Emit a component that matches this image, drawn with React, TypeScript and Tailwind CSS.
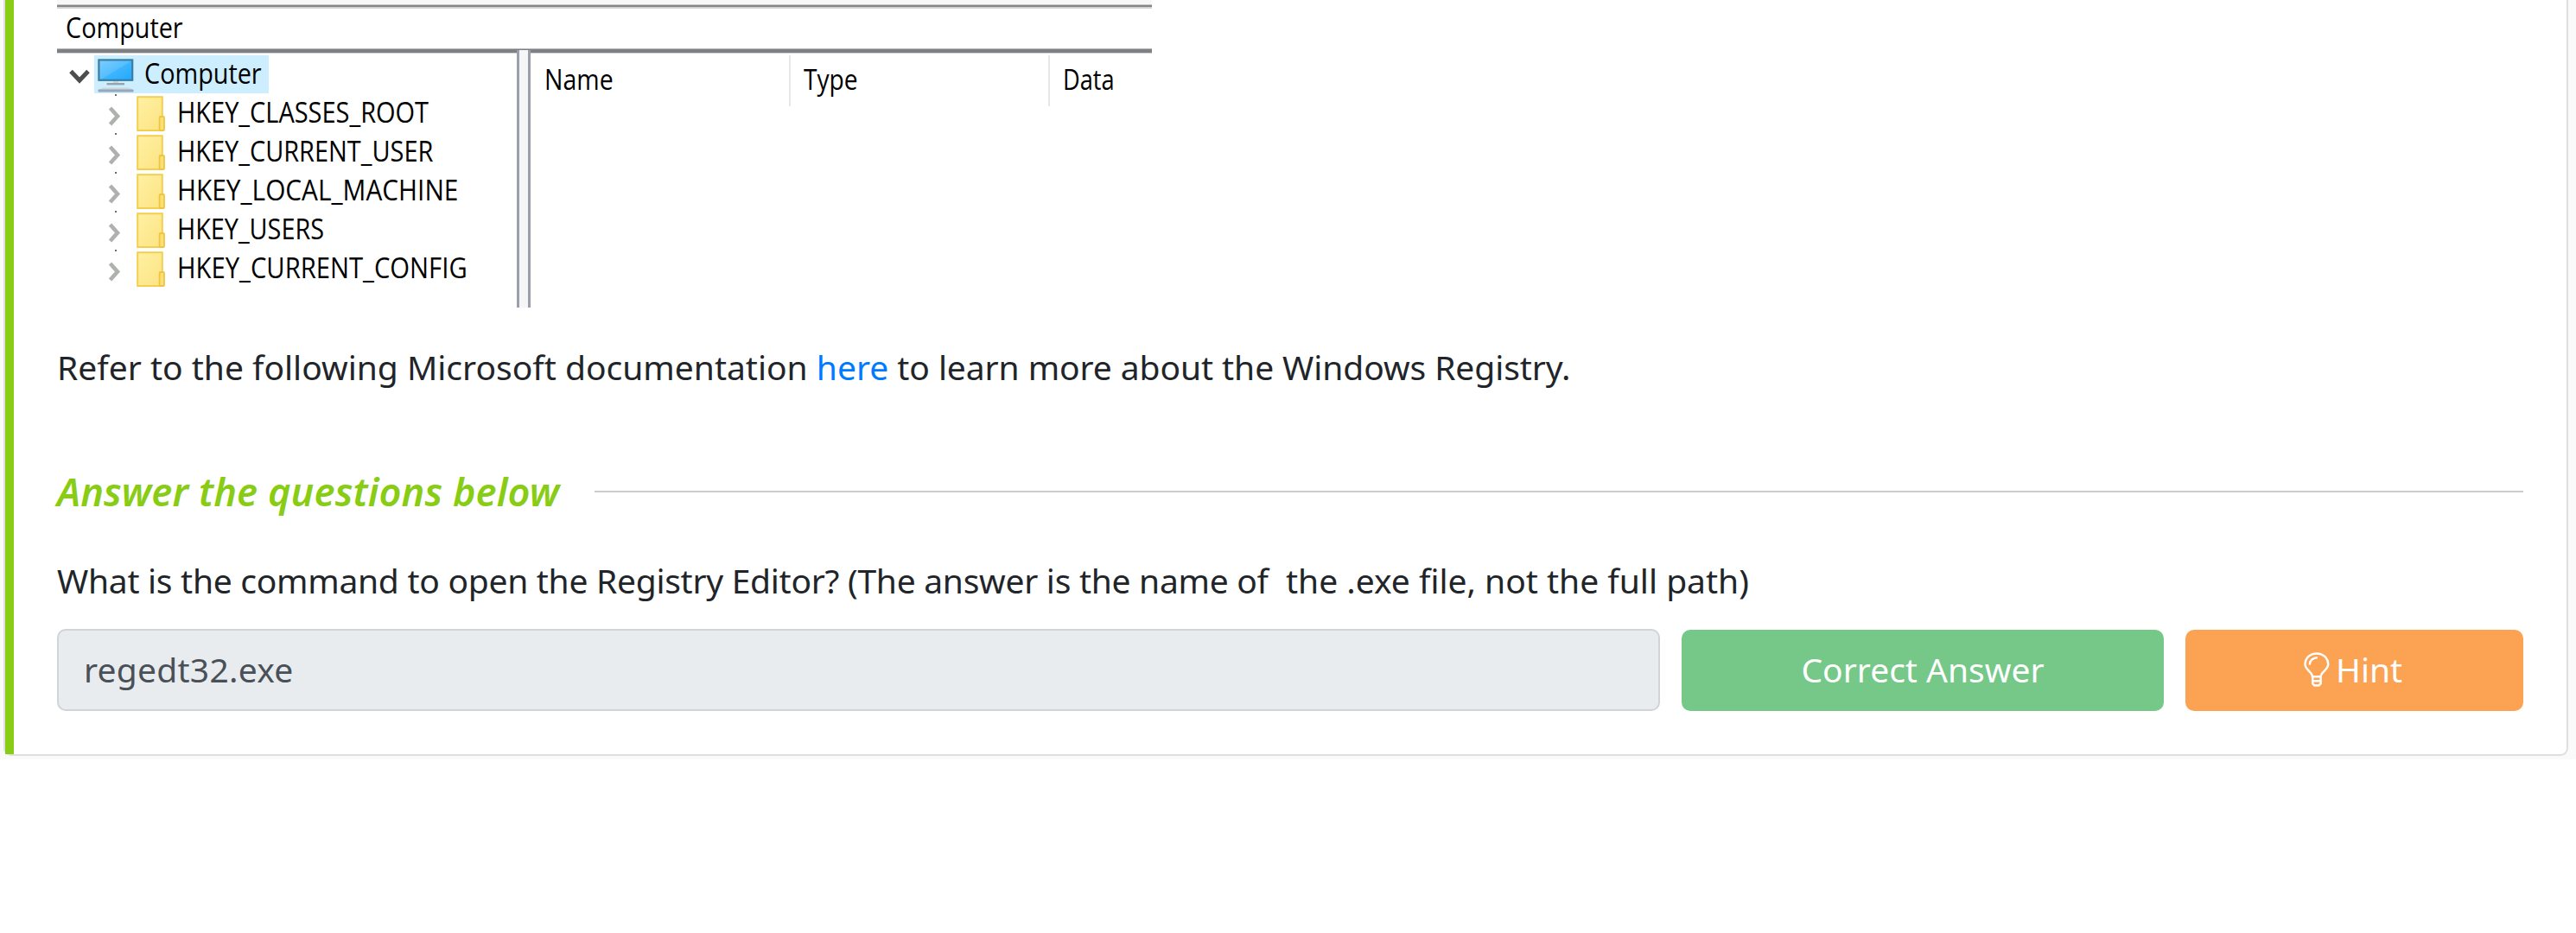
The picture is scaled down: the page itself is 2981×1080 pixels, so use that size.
type Hive = { label: string; fit: string };

const hives: Hive[] = [
  { label: "HKEY_CLASSES_ROOT", fit: "scale-x-[0.905]" },
  { label: "HKEY_CURRENT_USER", fit: "scale-x-[0.904]" },
  { label: "HKEY_LOCAL_MACHINE", fit: "scale-x-[0.932]" },
  { label: "HKEY_USERS", fit: "scale-x-[0.9]" },
  { label: "HKEY_CURRENT_CONFIG", fit: "scale-x-[0.914]" },
];

const regText =
  "block origin-left whitespace-nowrap font-['Open_Sans',sans-serif] text-[32px] leading-[41px] text-black";

function MonitorIcon() {
  return (
    <svg className="h-[40px] w-[42px]" viewBox="0 0 42 40" fill="none">
      <defs>
        <linearGradient id="screen" x1="0" y1="0" x2="1" y2="1">
          <stop offset="0" stopColor="#7fcdff" />
          <stop offset="0.5" stopColor="#55bfff" />
          <stop offset="0.52" stopColor="#3fb5ff" />
          <stop offset="1" stopColor="#1fa9fd" />
        </linearGradient>
      </defs>
      <rect x="1.4" y="1.4" width="38.8" height="23.4" fill="url(#screen)" stroke="#3a7ea3" strokeWidth="2.2" />
      <rect x="18" y="26" width="6" height="3" fill="#c9d3d6" />
      <rect x="10.5" y="28" width="20.5" height="2.4" fill="#93a5b5" />
      <path d="M6 33.5h30l5 2.5H1z" fill="#cfd6d6" />
      <rect x="0.5" y="35.6" width="41" height="2.8" rx="1" fill="#96a6bb" />
    </svg>
  );
}

function FolderIcon() {
  return (
    <svg className="h-[42px] w-[34px]" viewBox="0 0 34 42" fill="none">
      <defs>
        <linearGradient id="folder" x1="0" y1="0" x2="1" y2="1">
          <stop offset="0" stopColor="#fff0a4" />
          <stop offset="1" stopColor="#fde482" />
        </linearGradient>
      </defs>
      <rect x="1.2" y="1.2" width="28.6" height="38.8" fill="url(#folder)" stroke="#f3cf4f" strokeWidth="2" />
      <rect x="26.6" y="24" width="5.4" height="16" rx="1" fill="#fbe07a" stroke="#efc540" strokeWidth="1.8" />
    </svg>
  );
}

function BulbIcon() {
  return (
    <svg className="h-[40px] w-[30px]" viewBox="0 0 30 40" fill="none" stroke="#fff" strokeWidth="2.5">
      <path d="M10 28.2C9.6 22.5 1.6 20.8 1.5 13.8 1.5 6.6 7.5 1.4 14.8 1.4s13.4 5.2 13.4 12.4c-.1 7-8.2 8.700-8.600 14.400z" />
      <path d="M6.8 14.6c0-5 3.8-8.4 9-8.4" />
      <path d="M10.2 28v5.200h9.400V28M10.200 33v3.200l2.200 2.400h5l2.200-2.400V33" />
    </svg>
  );
}

function RegistryEditor() {
  return (
    <div className="flex h-[356px] w-[1267px] flex-col overflow-hidden">
      <div className="h-[5px] shrink-0 bg-[#f7f7f7]" />
      <div className="h-[5px] shrink-0 border-t border-b-2 border-t-[#c4c4c4] border-b-[#d2d2d2] bg-[#858585]" />
      <div className="flex h-[46px] shrink-0 items-start pt-px pl-[10px]">
        <span className={`${regText} scale-x-[0.9]`}>Computer</span>
      </div>
      <div className="h-[6px] shrink-0 border-t border-b border-t-[#b4b4b4] border-b-[#cfd1d6] bg-[#7d8085]" />
      <div className="flex flex-1">
        <div className="w-[532px] pt-[2px]">
          <div className="flex h-[45px] items-start">
            <svg className="mt-[16px] ml-[14px] h-[17px] w-[24px]" viewBox="0 0 24 17" fill="none">
              <path d="M2 2.5l10 10.500 10-10.500" stroke="#4d4d4d" strokeWidth="5" />
            </svg>
            <div className="ml-[5px] flex h-[44px] w-[202px] items-start bg-[#cceeff] pl-[4px]">
              <div className="mt-[4px]">
                <MonitorIcon />
              </div>
              <span className={`${regText} ml-[12px] scale-x-[0.9]`}>Computer</span>
            </div>
          </div>
          {hives.map((h) => (
            <div key={h.label} className="flex h-[45px] items-start">
              <div className="ml-[59px] flex w-[16px] flex-col">
                <div className="ml-[8px] h-[2px] w-[2px] bg-[#6a6a6a]" />
                <svg className="mt-[12px] h-[23px] w-[16px]" viewBox="0 0 16 23" fill="none">
                  <path d="M2.5 2l8.500 9.500-8.500 9.500" stroke="#aeb1ae" strokeWidth="4.6" />
                </svg>
              </div>
              <div className="mt-[2px] ml-[17px]">
                <FolderIcon />
              </div>
              <span className={`${regText} ml-[13px] ${h.fit}`}>{h.label}</span>
            </div>
          ))}
        </div>
        <div className="-mt-[4px] w-[16px] border-x-[3px] border-x-[#9a9fad] bg-[#f6f6f6]" />
        <div className="flex h-[61px] flex-1 pt-[2px]">
          <div className="w-[301px] border-r-2 border-[#e6e8e8] pt-[7px] pl-[16px]">
            <span className={`${regText} scale-x-[0.89]`}>Name</span>
          </div>
          <div className="w-[300px] border-r-2 border-[#e6e8e8] pt-[7px] pl-[15px]">
            <span className={`${regText} scale-x-[0.88]`}>Type</span>
          </div>
          <div className="pt-[7px] pl-[15px]">
            <span className={`${regText} scale-x-[0.85]`}>Data</span>
          </div>
        </div>
      </div>
    </div>
  );
}

export default function App() {
  return (
    <div className="h-[1080px] w-[2981px] overflow-hidden bg-white font-['Noto_Sans',sans-serif] text-[39px] leading-[60px] text-[#212529]">
      <div className="h-[879px] bg-[#fafafa] pl-[4px]">
        <div className="flex h-[875px] w-[2968px] rounded-b-[9px] border-2 border-t-0 border-[#dfdfdf] bg-white">
          <div className="w-[10px] shrink-0 bg-[#88cc14]" />
          <div className="w-[2904px] pl-[50px]">
            <RegistryEditor />
            <p className="mt-[39px] whitespace-nowrap">
              Refer to the following Microsoft documentation{" "}
              <a className="text-[#007bff]">here</a>
              <span className="tracking-[-0.08px]"> to learn more about the Windows Registry.</span>
            </p>
            <div className="mt-[84px] flex items-center">
              <h2 className="w-[622px] shrink-0 text-[45px] leading-[60px] font-semibold tracking-[0.1px] whitespace-nowrap text-[#88cc14] italic">
                Answer the questions below
              </h2>
              <div className="h-[2px] flex-1 bg-[#cccccc]" />
            </div>
            <p className="mt-[43px] whitespace-pre">
              <span className="tracking-[-0.28px]">
                What is the command to open the Registry Editor? (The answer is the name of
              </span>
              {"  the .exe file, not the full path)"}
            </p>
            <div className="mt-[26px] flex h-[95px] items-end">
              <div className="flex h-[95px] w-[1855px] items-center rounded-[10px] border-2 border-[#ced4da] bg-[#e9ecef] pb-[2px] pl-[29px] tracking-[0.25px] text-[#495057]">
                regedt32.exe
              </div>
              <div className="ml-[25px] flex h-[94px] w-[558px] items-center justify-center rounded-[10px] bg-[#75c888] pb-[2px] text-white">
                Correct Answer
              </div>
              <div className="ml-[25px] flex h-[94px] flex-1 items-center rounded-[10px] bg-[#fca253] pb-[2px] pl-[137px] text-white">
                <BulbIcon />
                <span className="ml-[7px]">Hint</span>
              </div>
            </div>
          </div>
        </div>
      </div>
    </div>
  );
}
